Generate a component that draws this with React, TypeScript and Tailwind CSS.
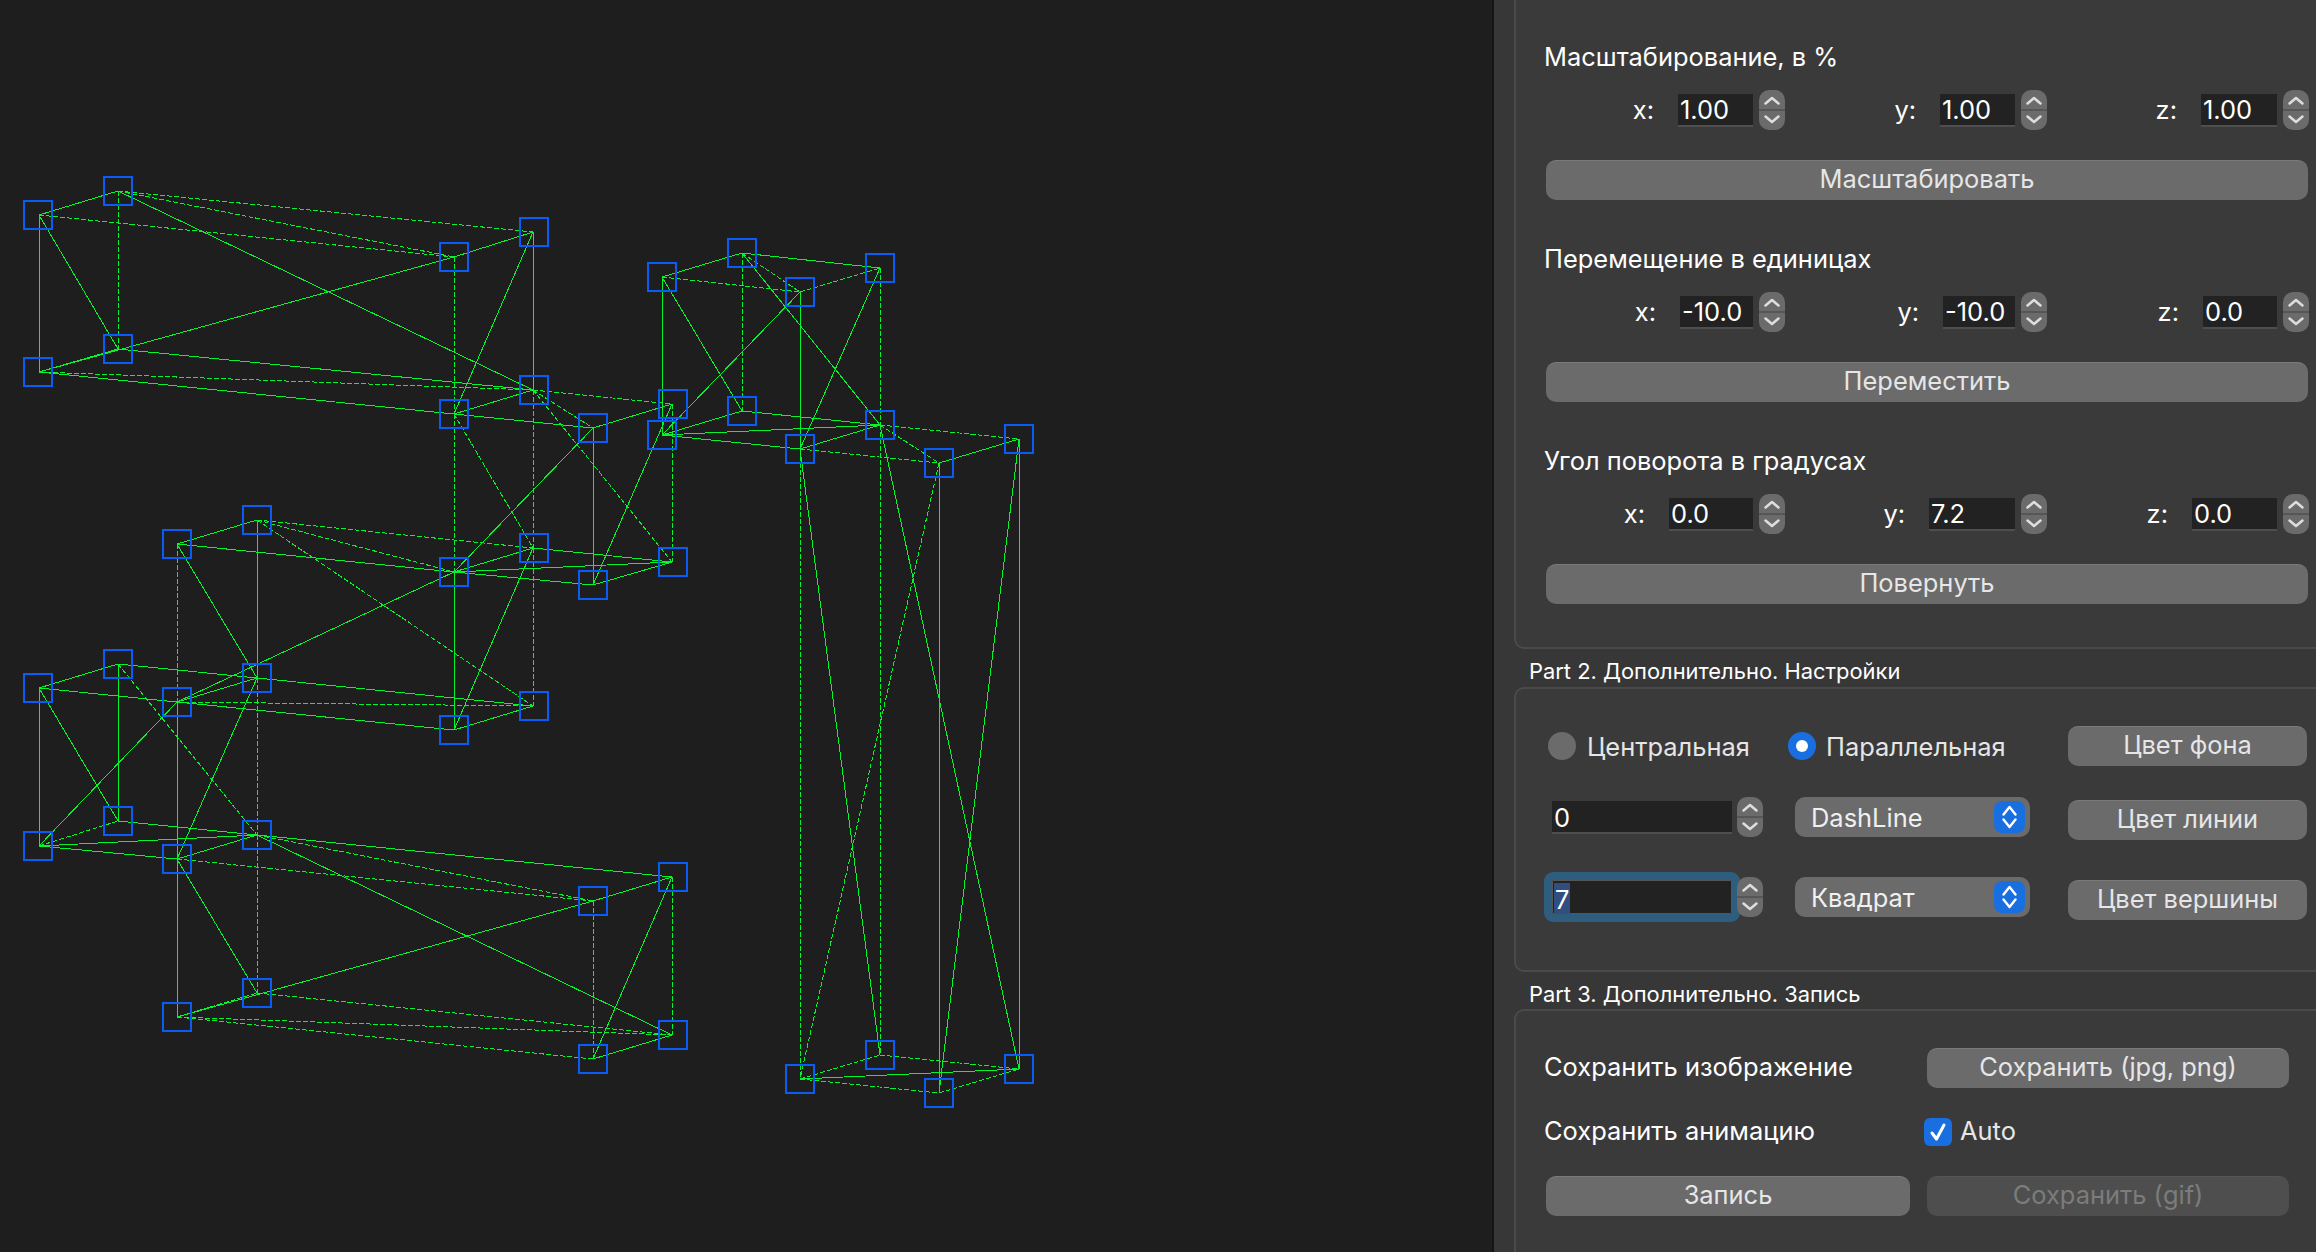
import React from 'react';

// vertices of the wireframe, in canvas pixels
const V: Record<string, [number, number]> = {
  a: [39, 215], b: [118, 191], c: [454, 257], d: [533, 232],
  e: [39, 372], f: [118, 349], g: [454, 414], h: [533, 390],
  i: [593, 428], j: [672, 404],
  o: [454, 572], p: [533, 548], q: [593, 585], r: [672, 562],
  m: [177, 544], n: [257, 520],
  s: [177, 702], t: [257, 678], u: [454, 730], v: [533, 706],
  w: [39, 688], x: [118, 664], y: [39, 846], z: [118, 821],
  A: [177, 859], B: [257, 835], C: [593, 901], D: [672, 877],
  E: [177, 1017], F: [257, 993], G: [593, 1059], H: [672, 1035],
  k: [662, 277], K: [742, 253], L: [800, 292], M: [880, 268],
  l: [662, 435], N: [742, 411], O: [800, 449], P: [880, 425],
  Q: [939, 463], R: [1019, 439],
  S: [800, 1079], T: [880, 1055], U: [939, 1093], W: [1019, 1069],
};

// the vertex markers sit a pixel off the line ends in these columns
const shiftLeft = 'aewy';
const shiftRight = 'dhpvjrDH';

const edges = [
  'ab', 'cd', 'ef', 'eg', 'fh', 'gh', 'ec', 'af', 'bh', 'ae', 'dh', 'dg',
  'gi', 'ij', 'iq', 'oq', 'pr', 'qr', 'or', 'io', 'jq',
  'mn', 'mo', 'op', 'mt', 'nt', 'st', 'su', 'tv', 'uv', 'so', 'up', 'ou',
  'wx', 'ws', 'xt', 'wy', 'xz', 'sA', 'wz', 'yA', 'zB', 'AB', 'yB', 'At', 'ys',
  'AE', 'AF', 'BH', 'CD', 'EC', 'BD', 'GH', 'DG',
  'kK', 'KM', 'kl', 'LO', 'kN', 'KP', 'lL', 'OM', 'lN', 'lO', 'NP', 'OP', 'lP',
  'OT', 'PW', 'QU', 'RW', 'QR', 'RU', 'SW',
];
const dashed = [
  'ac', 'bd', 'bc', 'eh', 'bf', 'cg', 'hi', 'hj', 'go', 'hp', 'jr', 'gp', 'hr',
  'np', 'no', 'nv', 'ms', 'pv', 'sv', 'xB', 'yz', 'tB',
  'AC', 'BC', 'EG', 'FH', 'EF', 'EH', 'BF', 'CG', 'DH',
  'kL', 'LM', 'KL', 'KN', 'MP',
  'OQ', 'PR', 'PQ', 'OS', 'PT', 'QS', 'ST', 'SU', 'TW', 'UW',
];

const Wireframe = () => (
  <svg width="1492" height="1252" className="block" shapeRendering="crispEdges">
    {edges.map((e, i) => (
      <line key={i} x1={V[e[0]][0]} y1={V[e[0]][1]} x2={V[e[1]][0]} y2={V[e[1]][1]} stroke="#05f52c" strokeWidth="1" />
    ))}
    {dashed.map((e, i) => (
      <line key={i} x1={V[e[0]][0]} y1={V[e[0]][1]} x2={V[e[1]][0]} y2={V[e[1]][1]} stroke="#05f52c" strokeWidth="1" strokeDasharray="5 2" />
    ))}
    {Object.entries(V).map(([name, [x, y]]) => {
      const rx = shiftLeft.includes(name) ? x - 15 : shiftRight.includes(name) ? x - 13 : x - 14;
      return <rect key={name} x={rx} y={y - 14} width="28" height="28" fill="none" stroke="#0a5cf5" strokeWidth="2" />;
    })}
  </svg>
);

const Spin = () => (
  <div className="relative w-[26px] h-10 rounded-[10px] bg-[#6b6b6b] text-[#dedede] shrink-0">
    <div className="absolute left-0 right-0 top-[19px] h-[2px] bg-[#565656]" />
    <svg viewBox="0 0 26 40" className="absolute inset-0 w-[26px] h-10" fill="none" stroke="currentColor" strokeWidth="2.5" strokeLinecap="round" strokeLinejoin="round">
      <path d="M6.5 13.5 L13 8 L19.5 13.5" />
      <path d="M6.5 26.5 L13 32 L19.5 26.5" />
    </svg>
  </div>
);

const Field = ({ label, value, cell, box }: { label: string; value: string; cell: string; box: string }) => (
  <div className={`flex items-center justify-end h-10 ${cell}`}>
    <span className="text-white mr-[24px]">{label}</span>
    <div className={`h-[33px] bg-[#222222] border-b-2 border-[#4e4e4e] text-white leading-[32px] pl-[2px] ${box}`}>{value}</div>
    <div className="ml-[6px]"><Spin /></div>
  </div>
);

const Btn = ({ children, className, disabled }: { children: React.ReactNode; className: string; disabled?: boolean }) => (
  <div
    className={`h-10 rounded-[10px] flex items-center justify-center border-t pb-[2px] ${
      disabled ? 'bg-[#4e4e4e] text-[#7c7c7c] border-[#555555]' : 'bg-[#6b6b6b] text-[#e6e6e6] border-[#7a7a7a]'
    } ${className}`}
  >
    {children}
  </div>
);

const Transform = ({ title, button, fields }: {
  title: string;
  button: string;
  fields: { label: string; value: string; box: string }[];
}) => (
  <div className="mb-[44px]">
    <div className="h-[30px] leading-[30px] text-white">{title}</div>
    <div className="flex mt-[18px] h-10">
      <Field {...fields[0]} cell="w-[241px]" />
      <Field {...fields[1]} cell="w-[262px]" />
      <Field {...fields[2]} cell="w-[262px]" />
    </div>
    <Btn className="mt-[30px] ml-[2px] w-[762px]">{button}</Btn>
  </div>
);

const Select = ({ value }: { value: string }) => (
  <div className="w-[235px] h-10 rounded-[10px] bg-[#6b6b6b] flex items-center justify-between pl-4 pr-[5px] text-[#f0f0f0] shrink-0">
    <span className="pt-[3px]">{value}</span>
    <div className="w-[31px] h-8 rounded-[8px] bg-[#1a6fe0] text-white">
      <svg viewBox="0 0 31 32" className="w-[31px] h-8" fill="none" stroke="currentColor" strokeWidth="2.4" strokeLinecap="round" strokeLinejoin="round">
        <path d="M9.5 13.5 L15.5 6 L21.5 13.5" />
        <path d="M9.5 18.5 L15.5 26 L21.5 18.5" />
      </svg>
    </div>
  </div>
);

const Group = ({ className, children }: { className: string; children: React.ReactNode }) => (
  <div className={`bg-[#3a3a3a] border-l-2 border-[#4a4a4a] pl-[28px] ${className}`}>{children}</div>
);

const Caption = ({ children }: { children: React.ReactNode }) => (
  <div className="pl-[15px] text-white text-[21.9px] leading-[30px]">{children}</div>
);

export default function App() {
  return (
    <div className="w-[2316px] h-[1252px] flex overflow-hidden bg-[#1e1e1e] text-[25.45px] font-['Inter','Noto_Sans',sans-serif]">
      <div className="w-[1492px] h-full shrink-0 bg-[#1e1e1e]">
        <Wireframe />
      </div>

      <div className="flex-1 bg-[#373737] border-l-2 border-[#151515] pl-[20px] flex flex-col">
        <Group className="h-[649px] border-b-2 rounded-bl-[10px] pt-[42px]">
          <Transform
            title="Масштабирование, в %"
            button="Масштабировать"
            fields={[
              { label: 'x:', value: '1.00', box: 'w-[75px]' },
              { label: 'y:', value: '1.00', box: 'w-[75px]' },
              { label: 'z:', value: '1.00', box: 'w-[76px]' },
            ]}
          />
          <Transform
            title="Перемещение в единицах"
            button="Переместить"
            fields={[
              { label: 'x:', value: '-10.0', box: 'w-[73px]' },
              { label: 'y:', value: '-10.0', box: 'w-[72px]' },
              { label: 'z:', value: '0.0', box: 'w-[74px]' },
            ]}
          />
          <Transform
            title="Угол поворота в градусах"
            button="Повернуть"
            fields={[
              { label: 'x:', value: '0.0', box: 'w-[84px]' },
              { label: 'y:', value: '7.2', box: 'w-[86px]' },
              { label: 'z:', value: '0.0', box: 'w-[85px]' },
            ]}
          />
        </Group>

        <div className="h-[38px] pt-[7px]"><Caption>Part 2. Дополнительно. Настройки</Caption></div>

        <Group className="h-[285px] border-t-2 border-b-2 rounded-l-[10px] pt-[37px]">
          <div className="flex items-center h-10">
            <div className="w-7 h-7 ml-[4px] rounded-full bg-[#6b6b6b] shrink-0" />
            <span className="ml-[11px] w-[201px] text-[#e6e6e6] pt-[2px]">Центральная</span>
            <div className="w-7 h-7 rounded-full bg-[#1a6fe0] shrink-0 flex items-center justify-center">
              <div className="w-3 h-3 rounded-full bg-white" />
            </div>
            <span className="ml-[10px] w-[242px] text-[#e6e6e6] pt-[2px]">Параллельная</span>
            <Btn className="w-[239px]">Цвет фона</Btn>
          </div>

          <div className="flex items-center h-10 mt-[31px]">
            <div className="w-[180px] h-[33px] ml-[8px] bg-[#222222] border-b-2 border-[#4e4e4e] text-white leading-[34px] pl-[2px] shrink-0">0</div>
            <div className="ml-[5px]"><Spin /></div>
            <div className="ml-[32px]"><Select value="DashLine" /></div>
            <Btn className="ml-[38px] w-[239px] mt-[6px]">Цвет линии</Btn>
          </div>

          <div className="flex items-center h-10 mt-[40px]">
            <div className="w-[180px] h-[34px] ml-[8px] bg-[#222222] border border-[#555555] shrink-0 text-white pl-[1px] outline-[8px] outline-[#2f5d7d] rounded-[1px]">
              <span className="inline-block bg-[#2f4f80] h-[31px] leading-[33px] px-[1px]">7</span>
            </div>
            <div className="ml-[5px]"><Spin /></div>
            <div className="ml-[32px]"><Select value="Квадрат" /></div>
            <Btn className="ml-[38px] w-[239px] mt-[6px]">Цвет вершины</Btn>
          </div>
        </Group>

        <div className="h-[37px] pt-[7px]"><Caption>Part 3. Дополнительно. Запись</Caption></div>

        <Group className="flex-1 border-t-2 rounded-tl-[10px] pt-[37px]">
          <div className="flex items-center h-10">
            <span className="w-[383px] text-white pb-[2px]">Сохранить изображение</span>
            <Btn className="w-[362px]">Сохранить (jpg, png)</Btn>
          </div>
          <div className="flex items-center h-10 mt-[24px]">
            <span className="w-[380px] text-white pb-[2px]">Сохранить анимацию</span>
            <div className="w-7 h-7 rounded-[6px] bg-[#1a6fe0] flex items-center justify-center shrink-0">
              <svg viewBox="0 0 28 28" className="w-7 h-7" fill="none" stroke="white" strokeWidth="3" strokeLinecap="round" strokeLinejoin="round">
                <path d="M8 15 L12.5 21 L20 7" />
              </svg>
            </div>
            <span className="ml-2 text-[#e6e6e6] pb-[2px]">Auto</span>
          </div>
          <div className="flex items-center h-10 mt-[24px] ml-[2px]">
            <Btn className="w-[364px]">Запись</Btn>
            <Btn disabled className="ml-[17px] w-[362px]">Сохранить (gif)</Btn>
          </div>
        </Group>
      </div>
    </div>
  );
}
